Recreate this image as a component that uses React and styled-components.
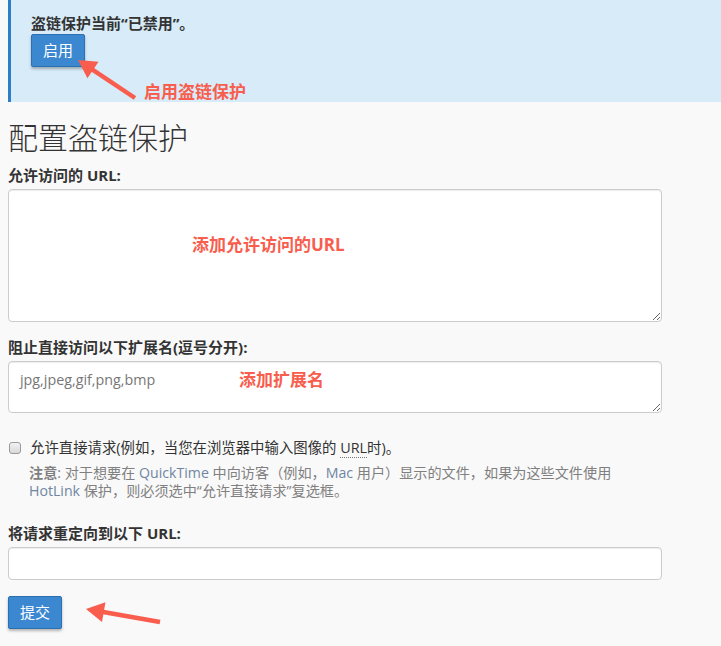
import React from "react";
import styled, { createGlobalStyle } from "styled-components";

const GlobalStyle = createGlobalStyle`
  html, body {
    margin: 0;
    padding: 0;
    background: #f9f9f9;
  }
  * {
    box-sizing: border-box;
  }
`;

const RED = "#f85d4d";

function arrowPath(tail, tip, headLen = 18, headHalf = 10) {
  const dx = tip[0] - tail[0];
  const dy = tip[1] - tail[1];
  const len = Math.hypot(dx, dy);
  const ux = dx / len;
  const uy = dy / len;
  const bx = tip[0] - ux * headLen;
  const by = tip[1] - uy * headLen;
  const nx = -uy;
  const ny = ux;
  return {
    line: `M${tail[0]},${tail[1]} L${bx + ux * 2},${by + uy * 2}`,
    head: `${tip[0]},${tip[1]} ${bx + nx * headHalf},${by + ny * headHalf} ${bx - nx * headHalf},${by - ny * headHalf}`,
  };
}

function Arrow({ tail, tip }) {
  const p = arrowPath(tail, tip);
  return (
    <g>
      <path d={p.line} stroke={RED} strokeWidth="4.5" strokeLinecap="butt" fill="none" />
      <polygon points={p.head} fill={RED} />
    </g>
  );
}

function App() {
  return (
    <Page>
      <GlobalStyle />
      <Alert>
        <AlertText>盗链保护当前“已禁用”。</AlertText>
        <Button>启用</Button>
        <Callout $left={133} $top={82}>启用盗链保护</Callout>
      </Alert>

      <Form>
        <Title>配置盗链保护</Title>

        <Label>允许访问的 URL:</Label>
        <Field>
          <TextArea $height={133} />
          <Callout $left={184} $top={46}>添加允许访问的URL</Callout>
        </Field>

        <Label $gap={15}>阻止直接访问以下扩展名(逗号分开):</Label>
        <Field>
          <TextArea $height={52} defaultValue="jpg,jpeg,gif,png,bmp" />
          <Callout $left={231} $top={9}>添加扩展名</Callout>
        </Field>

        <CheckRow>
          <Check type="checkbox" />
          <span>
            允许直接请求(例如，当您在浏览器中输入图像的 <Abbr>URL</Abbr>时)。
          </span>
        </CheckRow>
        <Hint>
          <strong>注意</strong>: 对于想要在 <Latin>QuickTime</Latin> 中向访客（例如，<Latin>Mac</Latin> 用户）显示的文件，如果为这些文件使用
          <br />
          <Latin>HotLink</Latin> 保护，则必须选中“允许直接请求”复选框。
        </Hint>

        <Label $gap={23}>将请求重定向到以下 URL:</Label>
        <Input type="text" />

        <Button $submit>提交</Button>
      </Form>

      <Overlay width="721" height="646" viewBox="0 0 721 646">
        <Arrow tail={[135, 98]} tip={[78, 60]} />
        <Arrow tail={[160, 622]} tip={[86, 609]} />
      </Overlay>
    </Page>
  );
}

const Page = styled.div`
  position: relative;
  min-height: 646px;
  padding-left: 8px;
  background: #f9f9f9;
  color: #333;
  font-family: "Open Sans", "Noto Sans CJK SC", sans-serif;
  font-size: 14px;
  line-height: 20px;
  overflow: hidden;
`;

const Alert = styled.div`
  position: relative;
  background: #d7ebf8;
  border-left: 3px solid #2c7fc4;
  padding: 13px 20px 35px 20px;
`;

const AlertText = styled.div`
  font-size: 15px;
  font-weight: 700;
  line-height: 20px;
`;

const Button = styled.button`
  display: block;
  height: 33px;
  margin-top: ${({ $submit }) => ($submit ? "16px" : "1px")};
  padding: 0 11px;
  background: #3b88d0;
  border: 1px solid #2b70b2;
  border-radius: 2px;
  box-shadow: 0 2px 3px rgba(0, 0, 0, 0.28);
  color: #fff;
  font-family: "Open Sans", "Noto Sans CJK SC", sans-serif;
  font-size: 15px;
  line-height: 31px;
  cursor: pointer;
`;

const Callout = styled.span`
  position: absolute;
  left: ${({ $left }) => $left}px;
  top: ${({ $top }) => $top}px;
  color: ${RED};
  font-size: 17px;
  font-weight: 700;
  line-height: 20px;
  white-space: nowrap;
  pointer-events: none;
`;

const Form = styled.div`
  width: 654px;
`;

const Title = styled.h1`
  margin: 18px 0 9px;
  font-size: 30px;
  font-weight: 300;
  line-height: 36px;
  color: #333;
`;

const Label = styled.label`
  display: block;
  margin-top: ${({ $gap }) => ($gap ? `${$gap}px` : "0")};
  margin-bottom: 4px;
  font-size: 15px;
  font-weight: 700;
  line-height: 20px;
`;

const Field = styled.div`
  position: relative;
`;

const TextArea = styled.textarea`
  display: block;
  width: 100%;
  height: ${({ $height }) => $height}px;
  padding: 8px 11px;
  background: #fff;
  border: 1px solid #ccc;
  border-radius: 4px;
  box-shadow: inset 0 1px 1px rgba(0, 0, 0, 0.075);
  color: #777;
  font-family: "Open Sans", "Noto Sans CJK SC", sans-serif;
  font-size: 14.3px;
  line-height: 20px;
  resize: vertical;
  outline: none;
`;

const Input = styled.input`
  display: block;
  width: 100%;
  height: 33px;
  padding: 6px 11px;
  background: #fff;
  border: 1px solid #ccc;
  border-radius: 4px;
  box-shadow: inset 0 1px 1px rgba(0, 0, 0, 0.075);
  font-family: "Open Sans", "Noto Sans CJK SC", sans-serif;
  font-size: 14px;
  outline: none;
`;

const CheckRow = styled.label`
  display: flex;
  align-items: center;
  gap: 9px;
  margin-top: 25px;
  font-size: 14.4px;
  line-height: 20px;
`;

const Check = styled.input`
  appearance: none;
  width: 12px;
  height: 12px;
  margin: 0 0 0 1px;
  border: 1px solid #9a9a9a;
  border-radius: 3px;
  background: linear-gradient(#f2f2f2, #d9d9d9);
  flex-shrink: 0;
`;

const Abbr = styled.abbr`
  text-decoration: none;
  border-bottom: 1px dotted #777;
`;

const Hint = styled.p`
  margin: 6px 0 0;
  padding-left: 21px;
  color: #808080;
  font-size: 14.15px;
  line-height: 18px;

  strong {
    font-weight: 700;
  }
`;

const Latin = styled.span`
  color: #6f86a2;
`;

const Overlay = styled.svg`
  position: absolute;
  left: 0;
  top: 0;
  pointer-events: none;
`;

export default App;
